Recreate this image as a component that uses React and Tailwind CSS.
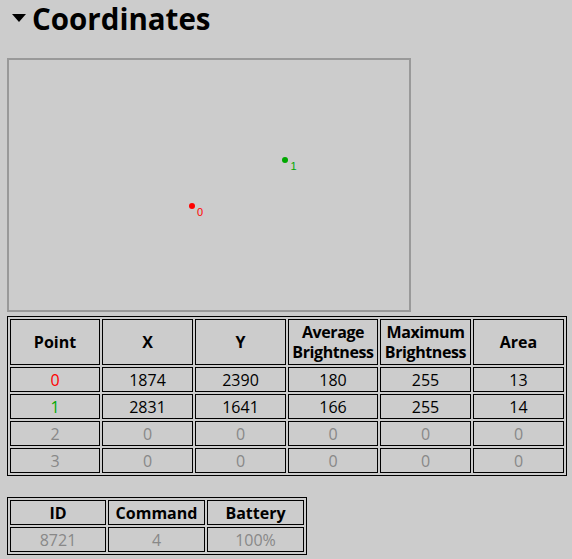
import React from "react";

const points = [
  { id: 0, x: 1874, y: 2390, avg: 180, max: 255, area: 13, color: "text-[#ff0000]", dot: "bg-[#ff0000]", active: true },
  { id: 1, x: 2831, y: 1641, avg: 166, max: 255, area: 14, color: "text-[#00a800]", dot: "bg-[#00a800]", active: true },
  { id: 2, x: 0, y: 0, avg: 0, max: 0, area: 0, active: false },
  { id: 3, x: 0, y: 0, avg: 0, max: 0, area: 0, active: false },
];

const cell = "border border-black p-0 text-center align-middle";

export default function App() {
  return (
    <div
      className="min-h-[559px] w-[572px] bg-[#cccccc] pl-[7px] text-black"
      style={{ fontFamily: '"Open Sans", "Noto Sans", sans-serif' }}
    >
      <div className="flex h-[38px] items-center">
        <svg width="14" height="8" viewBox="0 0 14 8" className="ml-[5px] mr-[6px] mt-[-3px] shrink-0">
          <polygon points="0,0 14,0 7,8" fill="#000" />
        </svg>
        <h1 className="m-0 whitespace-nowrap pr-[4px] text-[29.5px] font-bold leading-[38px]">Coordinates</h1>
      </div>

      <div className="mt-[20px] h-[254px] w-[404px] border-2 border-[#999999]">
        <div className="relative h-[250px] w-[400px]">
          {points
            .filter((p) => p.active)
            .map((p) => {
              const cx = (p.x * 400) / 4096;
              const cy = (p.y * 250) / 4096;
              return (
                <React.Fragment key={p.id}>
                  <div
                    className={`absolute h-[6px] w-[6px] rounded-full ${p.dot}`}
                    style={{ left: cx - 3, top: cy - 3 }}
                  />
                  <span
                    className={`absolute text-[11px] leading-[11px] ${p.color}`}
                    style={{ left: cx + 5, top: cy + 1, fontFamily: '"Liberation Sans", sans-serif' }}
                  >
                    {p.id}
                  </span>
                </React.Fragment>
              );
            })}
        </div>
      </div>

      <table className="mt-[4px] w-[560px] table-fixed border-separate border-spacing-[2px] border border-black text-[16px] leading-[20px]">
        <colgroup>
          <col className="w-[90px]" />
          <col className="w-[91px]" />
          <col className="w-[91px]" />
          <col className="w-[90px]" />
          <col className="w-[91px]" />
          <col className="w-[91px]" />
        </colgroup>
        <thead>
          <tr className="h-[46px] font-bold">
            <th className={cell}>Point</th>
            <th className={cell}>X</th>
            <th className={cell}>Y</th>
            <th className={`${cell} tracking-[-0.4px]`}>Average<br />Brightness</th>
            <th className={`${cell} tracking-[-0.4px]`}>Maximum<br />Brightness</th>
            <th className={cell}>Area</th>
          </tr>
        </thead>
        <tbody>
          {points.map((p) => {
            const t = p.active ? "text-black" : "text-[#888888]";
            return (
              <tr key={p.id} className="h-[25px]">
                <td className={`${cell} ${p.active ? p.color : "text-[#888888]"}`}>{p.id}</td>
                <td className={`${cell} ${t}`}>{p.x}</td>
                <td className={`${cell} ${t}`}>{p.y}</td>
                <td className={`${cell} ${t}`}>{p.avg}</td>
                <td className={`${cell} ${t}`}>{p.max}</td>
                <td className={`${cell} ${t}`}>{p.area}</td>
              </tr>
            );
          })}
        </tbody>
      </table>

      <table className="mt-[21px] w-[300px] table-fixed border-separate border-spacing-[2px] border border-black text-[16px] leading-[20px]">
        <colgroup>
          <col className="w-[96px]" />
          <col className="w-[97px]" />
          <col className="w-[97px]" />
        </colgroup>
        <thead>
          <tr className="h-[25px] font-bold">
            <th className={cell}>ID</th>
            <th className={cell}>Command</th>
            <th className={cell}>Battery</th>
          </tr>
        </thead>
        <tbody>
          <tr className="h-[25px] text-[#888888]">
            <td className={cell}>8721</td>
            <td className={cell}>4</td>
            <td className={cell}>100%</td>
          </tr>
        </tbody>
      </table>
    </div>
  );
}
